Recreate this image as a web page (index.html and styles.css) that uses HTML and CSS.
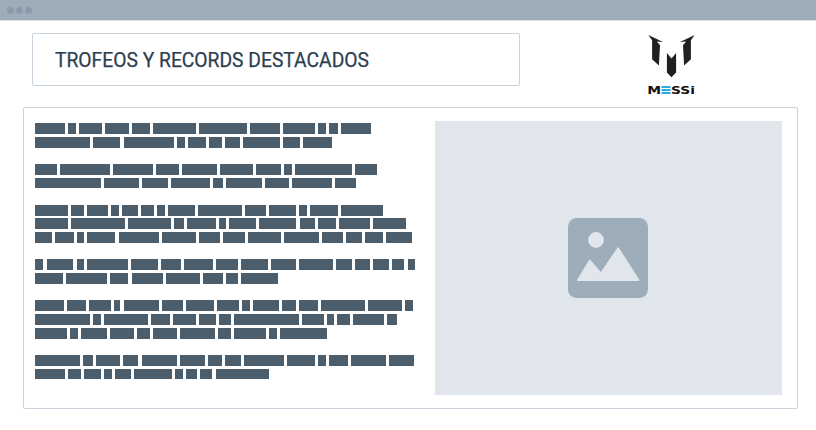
FILE: index.html
```html
<!DOCTYPE html>
<html lang="es">
<head>
<meta charset="utf-8">
<title>Trofeos y records destacados</title>
<link rel="stylesheet" href="styles.css">
</head>
<body>
<div class="topbar"><i class="dot"></i><i class="dot"></i><i class="dot"></i></div>
<header class="header">
  <h1 class="title"><svg class="title-text" width="420" height="30"><text x="0" y="22" textLength="314" lengthAdjust="spacingAndGlyphs">TROFEOS Y RECORDS DESTACADOS</text></svg></h1>
  <svg class="logo" viewBox="0 0 50 64" width="50" height="64">
    <g fill="#231f20">
      <path d="M2.300 2 17 9 10.800 8.600 14 12.200 12.900 32.500 6.100 26.300 6.100 7.200Z"/>
      <path d="M48.700 2 34 9 40.200 8.600 37 12.200 38.100 32.500 44.900 26.300 44.900 7.200Z"/>
      <path d="M20.900 20 25.500 25.600 30.100 20 30.100 39.600 25.500 44.200 20.900 39.600Z"/>
    </g>
    <g class="wordmark">
      <text x="1.200" y="61" textLength="13.800" lengthAdjust="spacingAndGlyphs">M</text>
      <text class="wordmark-e" x="15" y="61" textLength="9" lengthAdjust="spacingAndGlyphs">E</text>
      <path fill="#29abe2" d="M15.500 53h9v1.900h-9zM15.500 56h9v2h-9zM15.500 59.100h9v1.900h-9z"/>
      <path fill="#fff" d="M15 54.900h10v1.100h-10zM15 58h10v1.100h-10z"/>
      <text x="25" y="61" textLength="24" lengthAdjust="spacingAndGlyphs">SSi</text>
    </g>
  </svg>
</header>
<main class="panel">
  <div class="copy" id="copy"></div>
  <div class="media">
    <svg class="media-icon" viewBox="0 0 80 80" width="80" height="80">
      <rect width="80" height="80" rx="8.500" fill="#9eadba"/>
      <circle cx="28" cy="22" r="7.900" fill="#e1e5ec"/>
      <path d="M9.700 62.200 21.800 42.500 33 55.200 50.200 30 70.700 62.200Z" fill="#e1e5ec" stroke="#e1e5ec" stroke-width="1.500" stroke-linejoin="round"/>
    </svg>
  </div>
</main>
<script src="copy.js"></script>
</body>
</html>
```
FILE: styles.css
```css
* { box-sizing: border-box; }
body { margin: 0; height: 430px; overflow: hidden; background: #fff; font-family: Roboto, "Liberation Sans", sans-serif; }
.topbar { height: 20px; background: #9eadba; display: flex; align-items: center; gap: 2px; padding-left: 6.500px; box-shadow: 0 1px #dde3e8; }
.dot { width: 7px; height: 7px; border-radius: 50%; background: #8c9ba9; }
.header { display: flex; height: 87px; padding: 13px 0 0 32px; }
.title { margin: 0; width: 488px; height: 53px; border: 1px solid #c8d3dd; border-radius: 2px; display: flex; align-items: center; padding-left: 22px; font-weight: 400; }
.title-text { display: block; font-size: 20px; fill: #2c3e4f; stroke: #2c3e4f; stroke-width: .25px; }
.logo { display: block; margin: 0 0 0 126px; }
.wordmark { font-family: "DejaVu Sans", sans-serif; font-weight: 700; font-size: 11px; fill: #111; }
.wordmark-e { fill: #29abe2; }
.panel { width: 775px; height: 302px; margin-left: 23px; border: 1px solid #c8d3dd; border-radius: 2px; display: flex; justify-content: space-between; padding: 13px 15px 0 11px; }
.copy { padding-top: 2px; }
.paragraph { margin-bottom: 13.650px; }
.line { display: flex; gap: 3.333px; height: 13.650px; }
.word { flex: none; height: 10.900px; background: #4c5d6b; }
.media { width: 347px; height: 274px; background: #e1e5ec; display: flex; align-items: center; justify-content: center; }
.media-icon { margin-right: 2px; }
```
FILE: copy.js
```js
// Right edge of every word, in thirds of a pixel; the first word starts at 45.
const paragraphs = [
  [[135,167,246,327,390,528,680,780,885,918,954,1053],
   [209,301,462,494,557,605,660,779,840,936]],
  [[110,269,398,476,590,699,783,815,996,1071],
   [242,357,443,569,608,726,807,935,1007]],
  [[144,192,264,296,354,401,434,525,665,738,828,860,953,1089],
   [144,315,453,491,587,618,708,829,885,947,1050,1158],
   [96,161,192,286,416,527,600,675,782,896,968,1025,1089,1176]],
  [[70,160,191,323,414,483,578,654,744,828,939,995,1049,1106,1154,1185],
   [128,260,325,428,539,608,654,774]],
  [[131,198,272,301,416,488,581,657,690,777,828,893,1034,1146,1179],
   [209,242,384,449,527,587,633,836,911,941,990,1091,1131],
   [140,173,261,341,389,470,585,632,737,771,921]],
  [[180,218,299,355,471,554,605,662,792,884,918,983,1097,1182],
   [134,182,242,275,332,456,489,530,577,746]]
];
document.getElementById('copy').innerHTML = paragraphs.map(lines =>
  '<div class="paragraph">' + lines.map(ends => {
    let start = 45;
    return '<div class="line">' + ends.map(end => {
      const width = (end - start) / 3;
      start = end + 10;
      return `<span class="word" style="width:${width.toFixed(2)}px"></span>`;
    }).join('') + '</div>';
  }).join('') + '</div>').join('');
```
